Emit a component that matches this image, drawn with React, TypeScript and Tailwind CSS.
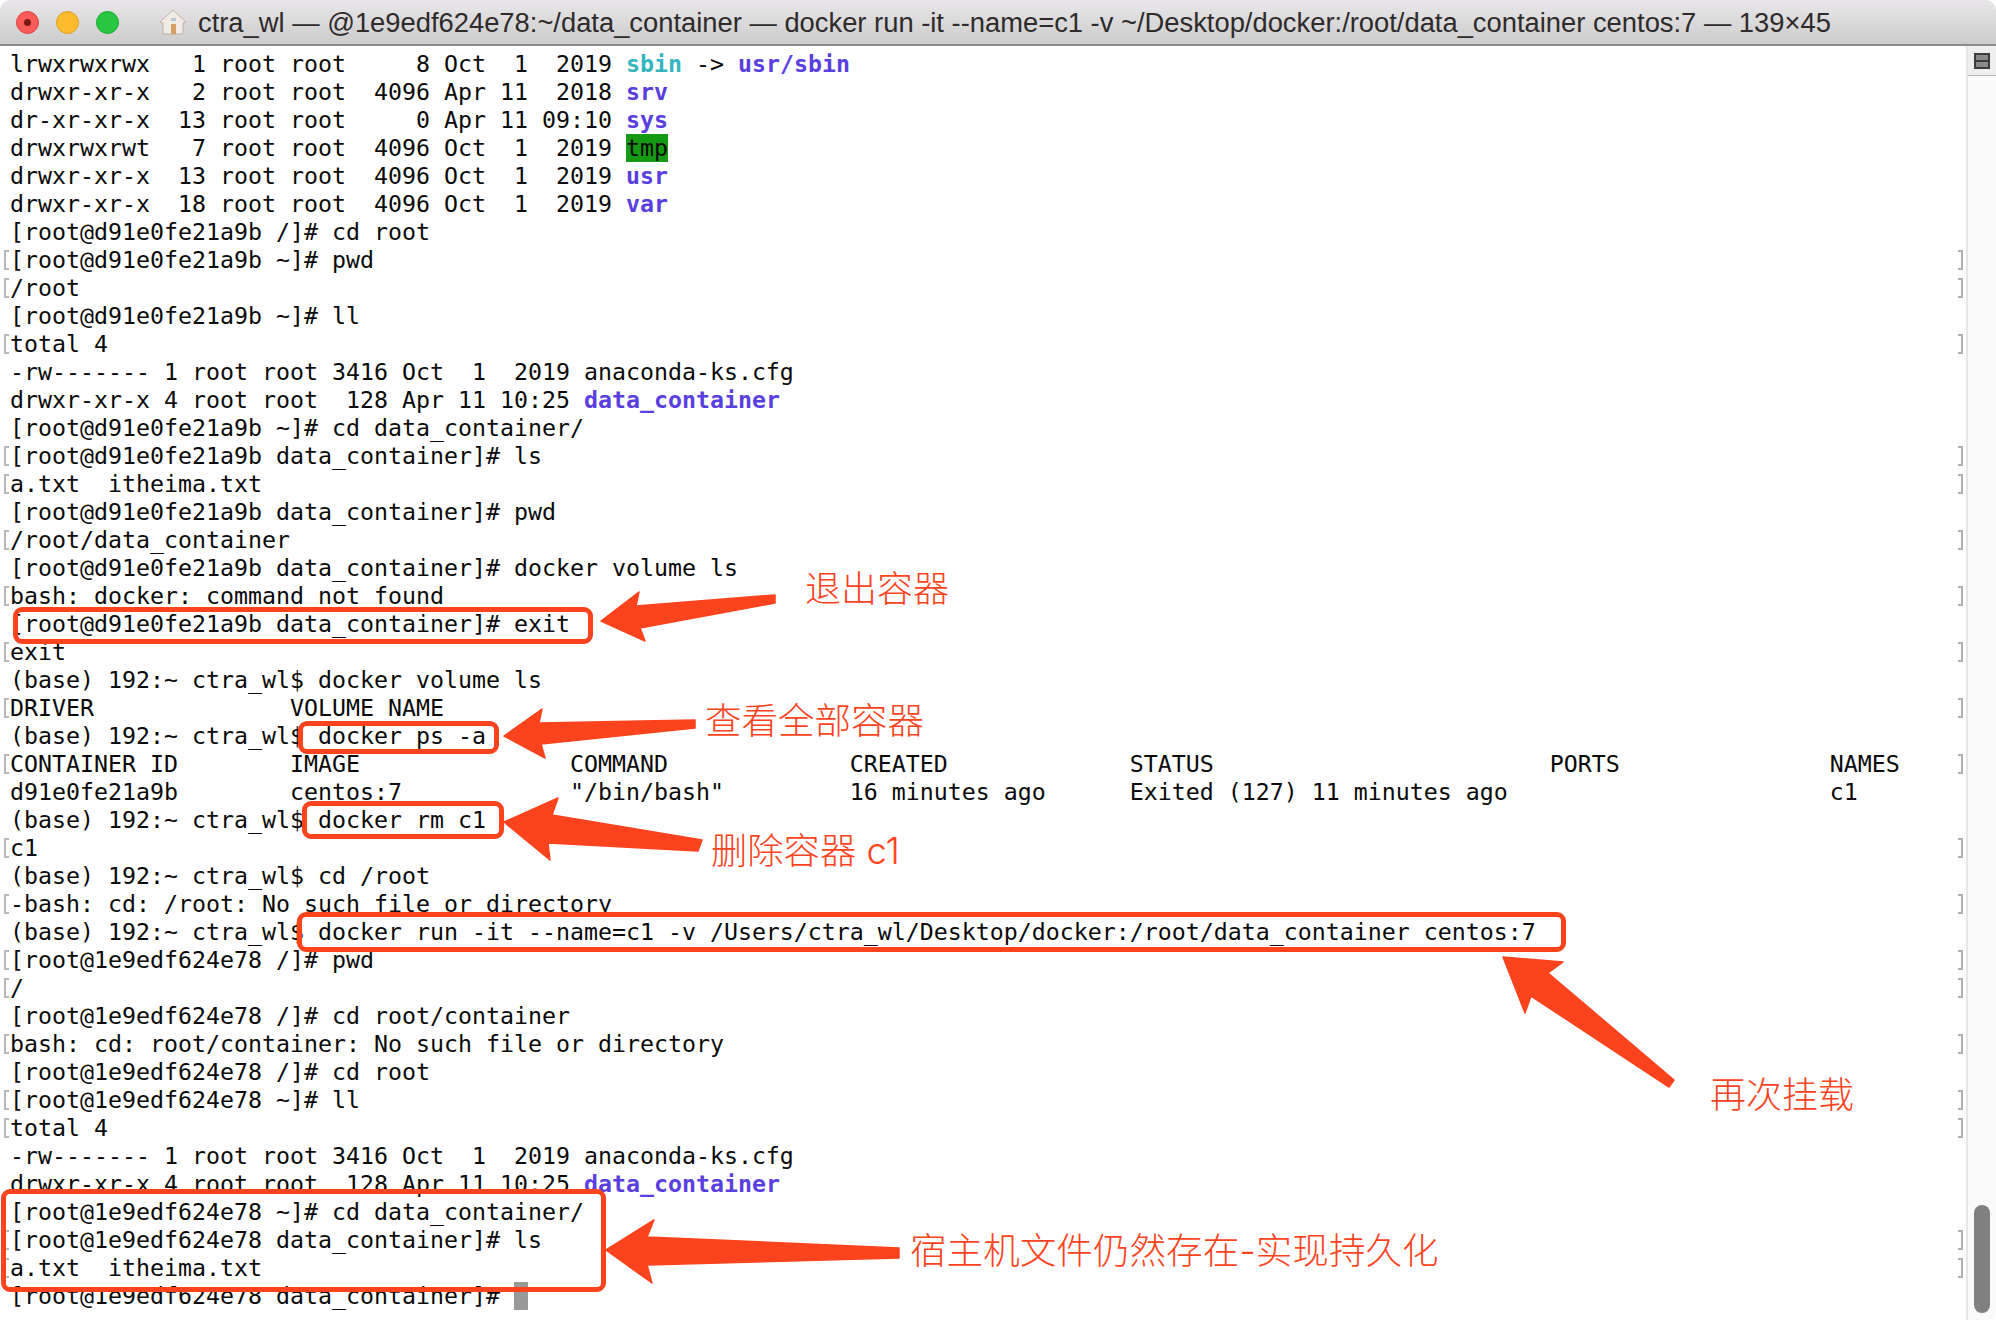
import type { ReactNode } from "react";

const BLUE = "font-bold text-[#5a3fe0]";

type Row = { text: ReactNode; mark?: boolean };

const ROWS: Row[] = [
  {
    text: (
      <>
        {"lrwxrwxrwx   1 root root     8 Oct  1  2019 "}
        <span className="font-bold text-[#35b5c0]">sbin</span>
        {" -> "}
        <span className={BLUE}>usr/sbin</span>
      </>
    ),
  },
  { text: <>{"drwxr-xr-x   2 root root  4096 Apr 11  2018 "}<span className={BLUE}>srv</span></> },
  { text: <>{"dr-xr-xr-x  13 root root     0 Apr 11 09:10 "}<span className={BLUE}>sys</span></> },
  { text: <>{"drwxrwxrwt   7 root root  4096 Oct  1  2019 "}<span className="inline-block h-[28px] bg-[#169a13]">tmp</span></> },
  { text: <>{"drwxr-xr-x  13 root root  4096 Oct  1  2019 "}<span className={BLUE}>usr</span></> },
  { text: <>{"drwxr-xr-x  18 root root  4096 Oct  1  2019 "}<span className={BLUE}>var</span></> },
  { text: "[root@d91e0fe21a9b /]# cd root" },
  { text: "[root@d91e0fe21a9b ~]# pwd", mark: true },
  { text: "/root", mark: true },
  { text: "[root@d91e0fe21a9b ~]# ll" },
  { text: "total 4", mark: true },
  { text: "-rw------- 1 root root 3416 Oct  1  2019 anaconda-ks.cfg" },
  { text: <>{"drwxr-xr-x 4 root root  128 Apr 11 10:25 "}<span className={BLUE}>data_container</span></> },
  { text: "[root@d91e0fe21a9b ~]# cd data_container/" },
  { text: "[root@d91e0fe21a9b data_container]# ls", mark: true },
  { text: "a.txt  itheima.txt", mark: true },
  { text: "[root@d91e0fe21a9b data_container]# pwd" },
  { text: "/root/data_container", mark: true },
  { text: "[root@d91e0fe21a9b data_container]# docker volume ls" },
  { text: "bash: docker: command not found", mark: true },
  { text: "[root@d91e0fe21a9b data_container]# exit" },
  { text: "exit", mark: true },
  { text: "(base) 192:~ ctra_wl$ docker volume ls" },
  { text: "DRIVER              VOLUME NAME", mark: true },
  { text: "(base) 192:~ ctra_wl$ docker ps -a" },
  {
    text: "CONTAINER ID        IMAGE               COMMAND             CREATED             STATUS                        PORTS               NAMES",
    mark: true,
  },
  { text: 'd91e0fe21a9b        centos:7            "/bin/bash"         16 minutes ago      Exited (127) 11 minutes ago                       c1' },
  { text: "(base) 192:~ ctra_wl$ docker rm c1" },
  { text: "c1", mark: true },
  { text: "(base) 192:~ ctra_wl$ cd /root" },
  { text: "-bash: cd: /root: No such file or directory", mark: true },
  { text: "(base) 192:~ ctra_wl$ docker run -it --name=c1 -v /Users/ctra_wl/Desktop/docker:/root/data_container centos:7" },
  { text: "[root@1e9edf624e78 /]# pwd", mark: true },
  { text: "/", mark: true },
  { text: "[root@1e9edf624e78 /]# cd root/container" },
  { text: "bash: cd: root/container: No such file or directory", mark: true },
  { text: "[root@1e9edf624e78 /]# cd root" },
  { text: "[root@1e9edf624e78 ~]# ll", mark: true },
  { text: "total 4", mark: true },
  { text: "-rw------- 1 root root 3416 Oct  1  2019 anaconda-ks.cfg" },
  { text: <>{"drwxr-xr-x 4 root root  128 Apr 11 10:25 "}<span className={BLUE}>data_container</span></> },
  { text: "[root@1e9edf624e78 ~]# cd data_container/" },
  { text: "[root@1e9edf624e78 data_container]# ls", mark: true },
  { text: "a.txt  itheima.txt", mark: true },
  { text: <>{"[root@1e9edf624e78 data_container]# "}<span className="inline-block h-[28px] w-[14px] bg-[#999999] align-top" /></> },
];

// Red callouts drawn on top of the terminal
const BOXES = [
  "left-[13px] top-[607px] h-[37px] w-[580px]",
  "left-[298px] top-[721px] h-[33px] w-[201px]",
  "left-[302px] top-[801px] h-[38px] w-[202px]",
  "left-[297px] top-[912px] h-[40px] w-[1269px]",
  "left-[1px] top-[1189px] h-[103px] w-[605px]",
];

const ARROWS = [
  "601,621 639,592 636,606 775,595 775,603 640,628 645,641",
  "504,736 542,709 539,723 695,720 695,728 541,744 545,758",
  "504,822 558,798 552,815 702,840 698,851 548,843 550,860",
  "1503,957 1563,962 1548,973 1674,1080 1669,1087 1531,996 1525,1013",
  "606,1250 654,1220 647,1237 899,1248 899,1258 647,1265 652,1283",
];

const LABELS = [
  { text: "退出容器", cls: "left-[805px] top-[568px] text-[36px]" },
  { text: "查看全部容器", cls: "left-[705px] top-[700px] text-[36.5px]" },
  { text: "删除容器 c1", cls: "left-[711px] top-[830px] text-[36.3px]" },
  { text: "再次挂载", cls: "left-[1710px] top-[1074px] text-[36px]" },
  { text: "宿主机文件仍然存在-实现持久化", cls: "left-[910px] top-[1230px] text-[36.6px]" },
];

function Bracket({ side }: { side: "left" | "right" }) {
  return (
    <span
      className={
        side === "left"
          ? "h-[20px] w-[5px] shrink-0 border-y-2 border-l-2 border-[#b8b8b8]"
          : "h-[20px] w-[5px] shrink-0 border-y-2 border-r-2 border-[#b0b0b0]"
      }
    />
  );
}

function TitleBar() {
  return (
    <div className="flex h-[46px] shrink-0 items-center border-b-2 border-[#8c8c8c] bg-gradient-to-b from-[#e9e7e9] to-[#cdcccd] pl-[16px]">
      <div className="flex items-center gap-[17px]">
        <span className="flex h-[23px] w-[23px] items-center justify-center rounded-full border border-[#d9453e] bg-[#fc5b57]">
          <span className="h-[7px] w-[7px] rounded-full bg-[#7c1a16]" />
        </span>
        <span className="h-[23px] w-[23px] rounded-full border border-[#dfa023] bg-[#febb2e]" />
        <span className="h-[23px] w-[23px] rounded-full border border-[#1ea82f] bg-[#27c83f]" />
      </div>
      <svg width="28" height="26" viewBox="0 0 28 26" className="ml-[40px] shrink-0">
        <path d="M14 1 L27 13 L24 14 L24 25 L4 25 L4 14 L1 13 Z" fill="#f1ede4" stroke="#b9b1a2" strokeWidth="1" />
        <rect x="12" y="15" width="5" height="10" fill="#d9a066" />
        <rect x="12" y="9" width="5" height="3" fill="#b9c7d6" />
      </svg>
      <span className="ml-[11px] mt-[2px] whitespace-pre font-['Liberation_Sans',sans-serif] text-[27.35px] text-[#2f2b2b]">
        ctra_wl — @1e9edf624e78:~/data_container — docker run -it --name=c1 -v ~/Desktop/docker:/root/data_container centos:7 — 139×45
      </span>
    </div>
  );
}

function Scrollbar() {
  return (
    <div className="flex w-[30px] shrink-0 flex-col border-l-2 border-[#e6e6e6] bg-[#fafafa]">
      <div className="flex h-[30px] shrink-0 items-center justify-center border-b border-[#b5b5b5] bg-[#efefef]">
        <div className="flex h-[16px] w-[16px] flex-col gap-[2px] border-2 border-[#3c3c3c] bg-[#3c3c3c]">
          <span className="h-[5px] bg-[#8a8a8a]" />
          <span className="h-[5px] bg-[#8a8a8a]" />
        </div>
      </div>
      <div className="flex flex-1 flex-col justify-end pb-[7px] pl-[6px]">
        <div className="h-[108px] w-[16px] rounded-full bg-[#808080]" />
      </div>
    </div>
  );
}

export default function App() {
  return (
    <div className="relative flex h-[1320px] w-[1996px] flex-col overflow-hidden rounded-[10px] bg-white">
      <TitleBar />
      <div className="flex min-h-0 flex-1">
        <div className="min-w-0 flex-1 pt-[4px] font-['DejaVu_Sans_Mono',monospace] text-[23.25px] leading-[28px] text-[#0a0a0a]">
          {ROWS.map((row, i) => (
            <div key={i} className="flex h-[28px] items-center pl-[4px] pr-[3px]">
              <div className="flex w-[6px] shrink-0">{row.mark && <Bracket side="left" />}</div>
              <div className="min-w-0 flex-1 whitespace-pre">{row.text}</div>
              {row.mark && <Bracket side="right" />}
            </div>
          ))}
        </div>
        <Scrollbar />
      </div>

      {BOXES.map((cls, i) => (
        <div key={i} className={`absolute rounded-[9px] border-[5px] border-[#fb431e] ${cls}`} />
      ))}

      <svg width="1996" height="1320" viewBox="0 0 1996 1320" className="pointer-events-none absolute left-0 top-0">
        {ARROWS.map((points) => (
          <polygon key={points} points={points} fill="#fb431e" stroke="#fb431e" strokeWidth="1.5" strokeLinejoin="round" />
        ))}
      </svg>

      {LABELS.map((label) => (
        <span
          key={label.text}
          className={`absolute whitespace-pre font-['Inter','Noto_Sans_CJK_SC',sans-serif] leading-[42px] font-light text-[#fb431e] ${label.cls}`}
        >
          {label.text}
        </span>
      ))}
    </div>
  );
}
